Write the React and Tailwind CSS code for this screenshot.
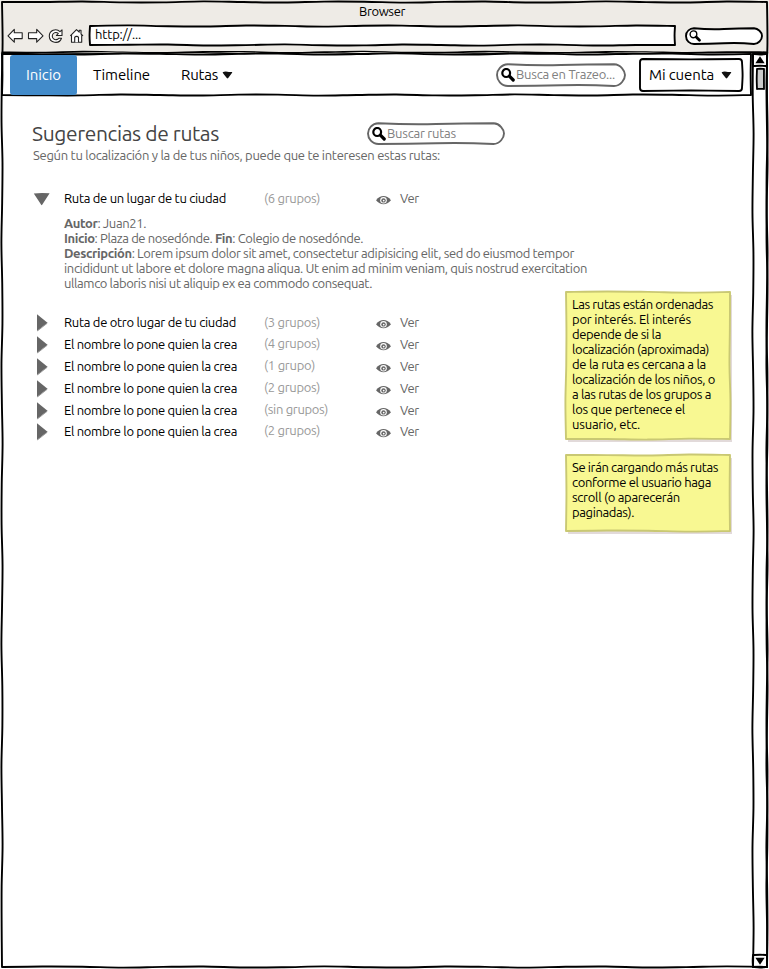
import React, { useLayoutEffect, useRef, useState } from "react";

// Hand-drawn edge: smooth curve between two points with a small perpendicular drift.
function edge(x1, y1, x2, y2, amp, seed) {
  const len = Math.hypot(x2 - x1, y2 - y1);
  const n = Math.max(2, Math.round(len / 40));
  const nx = -(y2 - y1) / len;
  const ny = (x2 - x1) / len;
  const at = (i) => {
    const o = i === 0 || i === n ? 0 : amp * Math.sin(i * 1.9 + seed * 2.3);
    return [x1 + ((x2 - x1) * i) / n + nx * o, y1 + ((y2 - y1) * i) / n + ny * o];
  };
  let d = "";
  for (let i = 1; i <= n; i++) {
    const a = at(i - 1);
    const b = at(i);
    const p = i > 1 ? at(i - 2) : a;
    const q = i < n ? at(i + 1) : b;
    d += ` C${a[0] + (b[0] - p[0]) / 6} ${a[1] + (b[1] - p[1]) / 6} ${b[0] - (q[0] - a[0]) / 6} ${b[1] - (q[1] - a[1]) / 6} ${b[0]} ${b[1]}`;
  }
  return d;
}

function Sketch({ w, h, stroke = "#000", fill = "none", sw = 1.9, r = 0, amp = 0.6, seed = 1 }) {
  const c = (x, y, ex, ey) => (r ? ` Q${x} ${y} ${ex} ${ey}` : "");
  const d =
    `M${r} 0` +
    edge(r, 0, w - r, 0, amp, seed) +
    c(w, 0, w, r) +
    (h > 2 * r ? edge(w, r, w, h - r, amp, seed + 1) : "") +
    c(w, h, w - r, h) +
    edge(w - r, h, r, h, amp, seed + 2) +
    c(0, h, 0, h - r) +
    (h > 2 * r ? edge(0, h - r, 0, r, amp, seed + 3) : "") +
    c(0, 0, r, 0) +
    "Z";
  return (
    <svg className="pointer-events-none absolute left-0 top-0 overflow-visible" width={w} height={h}>
      <path d={d} fill={fill} stroke={stroke} strokeWidth={sw} strokeLinejoin="round" />
    </svg>
  );
}

function Pill({ w, h, stroke, sw = 1.9 }) {
  const k = h / 2;
  const d = `M${k} 0.3 Q${w * 0.3} 1.6 ${w * 0.5} 1 T${w - k} 0.3 C${w - 4} 0.6 ${w} ${k - 4} ${w} ${k} C${w} ${k + 4} ${w - 4} ${h} ${w - k} ${h} Q${w * 0.7} ${h - 1.6} ${w * 0.5} ${h - 0.8} T${k} ${h} C4 ${h} 0 ${k + 5} 0 ${k} C0 ${k - 5} 4 0.6 ${k} 0.3Z`;
  return (
    <svg className="pointer-events-none absolute left-0 top-0 overflow-visible" width={w} height={h}>
      <path d={d} fill="#fff" stroke={stroke} strokeWidth={sw} />
    </svg>
  );
}

// Single line of text whose tracking is adjusted to fill the given width.
function Line({ w, className = "", children }) {
  const ref = useRef(null);
  const [ls, setLs] = useState(0);
  useLayoutEffect(() => {
    const el = ref.current;
    el.style.letterSpacing = "0px";
    const natural = el.getBoundingClientRect().width;
    const v = (w - natural) / el.textContent.length;
    el.style.letterSpacing = `${v}px`;
    setLs(v);
  }, [w]);
  return (
    <span className={`block ${className}`}>
      <span ref={ref} className="inline-block whitespace-pre" style={{ letterSpacing: ls }}>
        {children}
      </span>
    </span>
  );
}

const Magnifier = ({ size = 14, sw = 2.2, className = "" }) => (
  <svg className={`shrink-0 ${className}`} width={size} height={size} viewBox="0 0 14 14">
    <ellipse cx="5.2" cy="5" rx="3.9" ry="4" fill="none" stroke="#000" strokeWidth={sw} />
    <path d="M8.4 8.2 12.2 12" stroke="#000" strokeWidth="3.2" strokeLinecap="round" />
  </svg>
);

const Caret = () => (
  <svg width="11" height="8" viewBox="0 0 11 8" className="shrink-0">
    <path d="M.6 1.200Q3 .3 5.500 .8T10.200 .9Q10.400 1.600 9.400 2.700L6.200 7Q5.500 7.800 4.800 7L1.400 2.700Z" fill="#111" />
  </svg>
);

const Eye = () => (
  <svg width="15" height="10" viewBox="0 0 15 10" className="mt-[4px] shrink-0">
    <path d="M0 5.200Q3.500 1 7.500 1T15 5.200Q11.500 9.200 7.500 9.200T0 5.200Z" fill="#666" />
    <circle cx="7.500" cy="5.200" r="3.300" fill="#fff" />
    <circle cx="7.500" cy="5.400" r="2.200" fill="#666" />
    <circle cx="7.700" cy="5.600" r=".9" fill="#fff" />
  </svg>
);

function NavIcons() {
  return (
    <svg width="78" height="18" viewBox="0 0 78 18" className="shrink-0" fill="#fff" stroke="#222" strokeWidth="1.100" strokeLinejoin="round">
      <path d="M1 8.800 7.300 2.300V5.800H15.200V11.600H7.300V15.200Z" />
      <path d="M36 8.800 29.700 2.300V5.800H21.500V11.600H29.700V15.200Z" />
      <path d="M42.300 9.200A6.300 6.300 0 0 1 53 4.600L55 2.900V8.500H49.400L51.300 6.400A3.600 3.600 0 1 0 51.800 11.200H54.500A6.300 6.300 0 0 1 42.300 9.200Z" />
      <path d="M64.500 8.300V15.300H74.700V8.300M63.300 8.800 69.500 2.700 72.200 5.200V3.200H74V7L76 8.800" />
      <path d="M67.700 15.200V10.200Q69.600 8.500 71.500 10.200V15.200" />
    </svg>
  );
}

const routes = [
  { name: "Ruta de otro lugar de tu ciudad", w: 172, groups: "(3 grupos)", gw: 56 },
  { name: "El nombre lo pone quien la crea", w: 173, groups: "(4 grupos)", gw: 56, up: true },
  { name: "El nombre lo pone quien la crea", w: 173, groups: "(1 grupo)", gw: 51, up: true },
  { name: "El nombre lo pone quien la crea", w: 173, groups: "(2 grupos)", gw: 56, up: true },
  { name: "El nombre lo pone quien la crea", w: 173, groups: "(sin grupos)", gw: 64, up: true, short: true },
  { name: "El nombre lo pone quien la crea", w: 173, groups: "(2 grupos)", gw: 56, up: true },
];

function Route({ name, w, groups, gw, up, short, open }) {
  return (
    <div className={`flex items-start ${open ? "h-[25px]" : short ? "h-[21px]" : "h-[22px]"}`}>
      <div className="w-8 shrink-0">
        {open ? (
          <svg width="18" height="14" viewBox="0 0 18 14" className="mt-px">
            <path d="M1.800 1.400Q9 .8 17.600 1.300L10.200 12.800Q9.600 13.600 9 12.600Z" fill="#666" />
          </svg>
        ) : (
          <svg width="18" height="18" viewBox="0 0 18 18" className="-mt-px">
            <path d="M5 .3 15.500 8.800 5 17Z" fill="#666" />
            <path d="M15.300 9.200 5.500 16.900" stroke="#888" strokeWidth=".8" />
          </svg>
        )}
      </div>
      <Line w={w} className="w-[200px] shrink-0 text-black">{name}</Line>
      <Line w={gw} className={`w-28 shrink-0 text-[#999] ${up ? "-mt-px" : ""}`}>{groups}</Line>
      <Eye />
      <Line w={19} className="ml-[9px] text-[#666]">Ver</Line>
    </div>
  );
}

function Note({ h, lines, seed }) {
  return (
    <div className="relative">
      <svg className="absolute left-[2px] top-[3px] overflow-visible" width="164" height={h}>
        <rect width="164" height={h} fill="#e2dada" />
      </svg>
      <Sketch w={164} h={h} stroke="#c9c873" fill="#f8f892" amp={0.6} seed={seed} />
      <div className="relative pl-[6px] pt-[5px] text-black">
        {lines.map(([t, w]) => (
          <Line key={t} w={w}>{t}</Line>
        ))}
      </div>
    </div>
  );
}

export default function App() {
  return (
    <div className="relative flex h-[969px] w-[769px] flex-col overflow-hidden bg-white font-['Ubuntu','Noto_Sans',sans-serif] text-[13px] leading-[15px]">
      <header className="flex h-[54px] shrink-0 flex-col bg-[#eeebe6] pt-[4px]">
        <div className="flex h-[22px] justify-center pr-[5px]">
          <Line w={46}>Browser</Line>
        </div>
        <div className="flex items-center pl-[7px]">
          <NavIcons />
          <div className="relative ml-[5px] h-[19px] w-[585px]">
            <Sketch w={585} h={19} fill="#fff" seed={4} />
            <div className="relative pl-[5px] pt-px">
              <Line w={46}>http://...</Line>
            </div>
          </div>
          <div className="relative ml-[11px] mt-px h-[16px] w-[76px]">
            <Pill w={76} h={16} stroke="#000" />
            <Magnifier size={12} sw={1.6} className="relative ml-[3px] mt-[2px]" />
          </div>
        </div>
      </header>

      <div className="flex min-h-0 flex-1">
        <div className="flex w-[753px] shrink-0 flex-col">
          <nav className="relative ml-[2px] flex h-[41px] w-[749px] items-center">
            <Sketch w={749} h={41} fill="#fff" seed={2} />
            <div className="relative ml-2 flex h-[40px] w-[67px] items-center justify-center rounded-[3px] bg-[#428bca] text-[15px] leading-5 text-white">
              <Line w={35}>Inicio</Line>
            </div>
            <Line w={57} className="relative ml-4 text-[15px] leading-5">Timeline</Line>
            <div className="relative ml-[31px] flex items-center gap-[4px] text-[15px] leading-5">
              <Line w={37}>Rutas</Line>
              <Caret />
            </div>
            <div className="relative ml-[264px] h-[22px] w-[128px]">
              <Pill w={128} h={22} stroke="#666" />
              <div className="relative flex h-full items-center pl-[4px] text-[#808080]">
                <Magnifier />
                <Line w={99} className="ml-px">Busca en Trazeo...</Line>
              </div>
            </div>
            <div className="relative ml-[15px] h-[32px] w-[102px]">
              <Sketch w={102} h={32} fill="#fff" r={3} seed={3} />
              <div className="relative flex h-full items-center gap-[7px] pl-[9px] text-[15px] leading-5">
                <Line w={65}>Mi cuenta</Line>
                <Caret />
              </div>
            </div>
          </nav>

          <main className="pl-8 pt-[23px]">
            <div className="flex h-[30px] text-[#444]">
              <Line w={187} className="w-[336px] pt-px text-[21px] leading-7">Sugerencias de rutas</Line>
              <div className="relative mt-[5px] h-[21px] w-[136px]">
                <Pill w={136} h={21} stroke="#666" />
                <div className="relative flex h-full items-center pl-[4px] text-[#808080]">
                  <Magnifier />
                  <Line w={69} className="ml-px">Buscar rutas</Line>
                </div>
              </div>
            </div>
            <Line w={407} className="ml-px h-[43px] text-[#666]">
              Según tu localización y la de tus niños, puede que te interesen estas rutas:
            </Line>

            <Route open name="Ruta de un lugar de tu ciudad" w={162} groups="(6 grupos)" gw={56} />
            <div className="ml-8 pb-6 text-[#666]">
              <Line w={82}><b>Autor</b>: Juan21.</Line>
              <Line w={299}><b>Inicio</b>: Plaza de nosedónde. <b>Fin</b>: Colegio de nosedónde.</Line>
              <Line w={510}><b>Descripción</b>: Lorem ipsum dolor sit amet, consectetur adipisicing elit, sed do eiusmod tempor</Line>
              <Line w={523}>incididunt ut labore et dolore magna aliqua. Ut enim ad minim veniam, quis nostrud exercitation</Line>
              <Line w={308}>ullamco laboris nisi ut aliquip ex ea commodo consequat.</Line>
            </div>
            {routes.map((r, i) => (
              <Route key={i} {...r} />
            ))}
          </main>
        </div>

        <aside className="relative flex w-[14px] flex-col justify-between">
          <Sketch w={14} h={913} seed={5} />
          <div>
            <div className="relative flex h-[12px] w-[14px] items-center justify-center">
              <Sketch w={14} h={12} amp={0.3} />
              <svg width="10" height="8" viewBox="0 0 10 8"><path d="M5 .2 9.600 7.300H.4Z" /></svg>
            </div>
            <div className="relative ml-[4px] mt-[3px] h-[20px] w-[7px]">
              <Sketch w={7} h={20} fill="#ccc" amp={0.3} sw={1.8} />
            </div>
          </div>
          <div className="relative mb-[2px] flex h-[12px] w-[14px] items-center justify-center">
            <Sketch w={14} h={12} amp={0.3} />
            <svg width="10" height="8" viewBox="0 0 10 8"><path d="M5 7.800 9.600 .8H.4Z" /></svg>
          </div>
        </aside>
      </div>

      {/* Sticky notes pinned on top of the mockup */}
      <div className="absolute left-[566px] top-[292px] flex flex-col gap-[23px]">
        <div className="h-[140px]">
          <Note h={147} seed={1} lines={[["Las rutas están ordenadas", 141], ["por interés. El interés", 119], ["depende de si la", 89], ["localización (aproximada)", 137], ["de la ruta es cercana a la", 134], ["localización de los niños, o", 143], ["a las rutas de los grupos a", 139], ["los que pertenece el", 113], ["usuario, etc.", 68]]} />
        </div>
        <Note h={76} seed={2} lines={[["Se irán cargando más rutas", 146], ["conforme el usuario haga", 139], ["scroll (o aparecerán", 108], ["paginadas).", 62]]} />
      </div>

      {/* Window outline */}
      <div className="pointer-events-none absolute left-[2px] top-[2px]">
        <Sketch w={765} h={965} seed={6} />
        <div className="absolute left-0 top-[49.500px]">
          <Sketch w={765} h={1} seed={3} sw={1.2} />
        </div>
      </div>
    </div>
  );
}
